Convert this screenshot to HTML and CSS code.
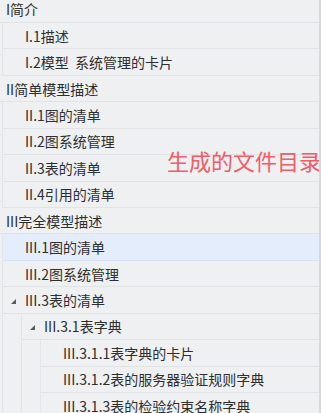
FILE: index.html
```html
<!DOCTYPE html>
<html lang="zh">
<head>
<meta charset="utf-8">
<link rel="stylesheet" href="styles.css">
</head>
<body>
<div class="panel">
  <div class="tree">
    <div class="row l1">I简介</div>
    <div class="group">
      <div class="row"><span class="tog"></span>I.1描述</div>
      <div class="row"><span class="tog"></span>I.2模型&nbsp;&nbsp;系统管理的卡片</div>
    </div>
    <div class="row l1">II简单模型描述</div>
    <div class="group">
      <div class="row"><span class="tog"></span>II.1图的清单</div>
      <div class="row"><span class="tog"></span>II.2图系统管理</div>
      <div class="row"><span class="tog"></span>II.3表的清单</div>
      <div class="row"><span class="tog"></span>II.4引用的清单</div>
    </div>
    <div class="row l1">III完全模型描述</div>
    <div class="group">
      <div class="row selected"><span class="tog"></span>III.1图的清单</div>
      <div class="row"><span class="tog"></span>III.2图系统管理</div>
      <div class="row"><span class="tog"><svg width="5" height="5" viewBox="0 0 5 5"><polygon points="5,0 5,5 0,5" fill="#5a5a5a"/></svg></span>III.3表的清单</div>
      <div class="group sub">
        <div class="row"><span class="tog"><svg width="5" height="5" viewBox="0 0 5 5"><polygon points="5,0 5,5 0,5" fill="#5a5a5a"/></svg></span>III.3.1表字典</div>
        <div class="group sub">
          <div class="row"><span class="tog"></span>III.3.1.1表字典的卡片</div>
          <div class="row"><span class="tog"></span>III.3.1.2表的服务器验证规则字典</div>
          <div class="row"><span class="tog"></span>III.3.1.3表的检验约束名称字典</div>
        </div>
      </div>
    </div>
  </div>
  <div class="note">生成的文件目录</div>
</div>
</body>
</html>
```
FILE: styles.css
```css
html, body {
  margin: 0;
  padding: 0;
  background: #eef0f2;
  overflow: hidden;
}
.panel {
  position: relative;
  width: 319px;
  height: 413px;
  border-right: 2px solid #d6d8da;
  background: #eef0f2;
  overflow: hidden;
  font-family: "Noto Sans CJK SC", "Noto Sans", sans-serif;
}
.tree {
  margin-top: -3.4px;
}
.row {
  box-sizing: border-box;
  height: 26.43px;
  display: flex;
  align-items: center;
  padding-left: 8px;
  border-bottom: 1px solid #e1e3e6;
  font-size: 14px;
  color: #2e2e2e;
  white-space: nowrap;
}
.row.l1 {
  padding-left: 6px;
}
.row.selected {
  background: #e4edfc;
  border-top: 1px solid #d6e2f6;
  border-bottom: 1px solid #d6e2f6;
  margin-top: -1px;
  height: 27.43px;
}
.tog {
  width: 14px;
  flex: none;
  display: flex;
  align-items: center;
  padding-top: 3px;
}
.group {
  margin-left: 2px;
  border-left: 1px solid #e3e5e8;
}
.group.sub {
  margin-left: 18px;
}
.note {
  position: absolute;
  left: 167px;
  top: 145px;
  font-size: 22px;
  line-height: 30px;
  color: #f35b65;
  white-space: nowrap;
}
```
